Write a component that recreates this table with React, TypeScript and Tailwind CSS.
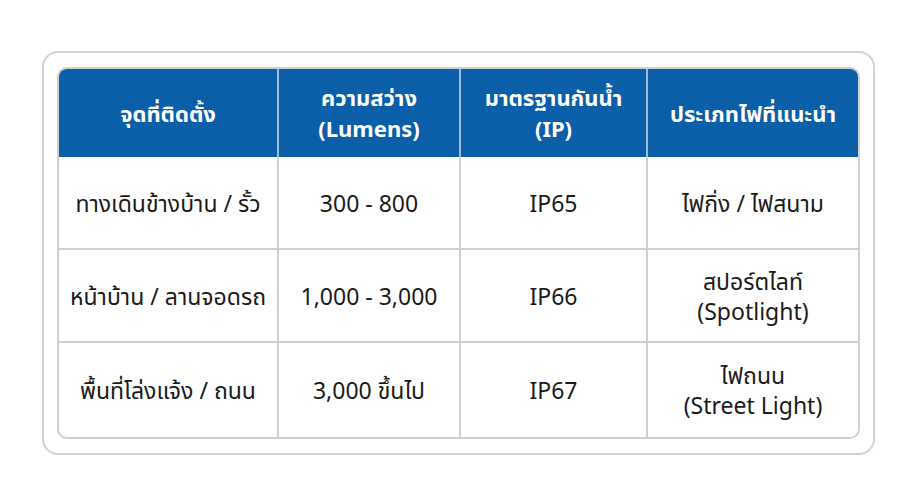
const HEADERS = ['จุดที่ติดตั้ง', 'ความสว่าง\n(Lumens)', 'มาตรฐานกันน้ำ\n(IP)', 'ประเภทไฟที่แนะนำ'];

const ROWS = [
  ['ทางเดินข้างบ้าน / รั้ว', '300 - 800', 'IP65', 'ไฟกิ่ง / ไฟสนาม'],
  ['หน้าบ้าน / ลานจอดรถ', '1,000 - 3,000', 'IP66', 'สปอร์ตไลท์\n(Spotlight)'],
  ['พื้นที่โล่งแจ้ง / ถนน', '3,000 ขึ้นไป', 'IP67', 'ไฟถนน\n(Street Light)'],
];

function Lines({ text }: { text: string }) {
  return (
    <>
      {text.split('\n').map((line, i) => (
        <span key={i} className="block">
          {line}
        </span>
      ))}
    </>
  );
}

export default function App() {
  return (
    <div
      className="flex h-[500px] w-[917px] items-center justify-center bg-white pt-[6px]"
      style={{ fontFamily: '"Noto Sans", "Noto Sans Thai", "Open Sans", sans-serif' }}
    >
      <div className="w-[833px] rounded-[16px] border-2 border-[#d2d2d2] bg-white px-[13px] py-[14px]">
        <div className="grid grid-cols-[220px_182px_187px_1fr] grid-rows-[88px_93px_93px_94px] overflow-hidden rounded-[10px] border-2 border-[#d0d0d0]">
          {HEADERS.map((h, i) => (
            <div
              key={h}
              className={
                'flex items-center justify-center bg-[#0b5ea8] text-center text-[22px] font-bold leading-[31px] text-white ' +
                (i < HEADERS.length - 1 ? 'border-r-2 border-[#9fbdd8]' : '')
              }
            >
              <div>
                <Lines text={h} />
              </div>
            </div>
          ))}
          {ROWS.map((row, r) =>
            row.map((cell, c) => (
              <div
                key={r + '-' + c}
                className={
                  'flex items-center justify-center text-center text-[23px] leading-[30px] text-[#1a1a1a] border-[#d0d0d0] ' +
                  (c < row.length - 1 ? 'border-r-2 ' : '') +
                  (r < ROWS.length - 1 ? 'border-b-2' : '')
                }
              >
                <div>
                  <Lines text={cell} />
                </div>
              </div>
            )),
          )}
        </div>
      </div>
    </div>
  );
}
